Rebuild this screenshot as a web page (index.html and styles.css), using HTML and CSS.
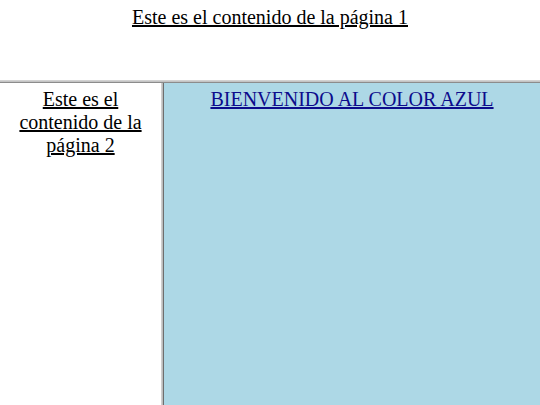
FILE: index.html
```html
<!DOCTYPE html>
<html lang="es">
<head>
<meta charset="utf-8">
<title>Frames</title>
<link rel="stylesheet" href="styles.css">
</head>
<body>
<div class="page">
  <div class="top-frame">
    <p class="frame-text top-text"><u>Este es el contenido de la página 1</u></p>
  </div>
  <div class="hborder"></div>
  <div class="bottom">
    <div class="left-frame">
      <p class="frame-text"><u>Este es el contenido de la página 2</u></p>
    </div>
    <div class="vborder"></div>
    <div class="right-frame">
      <p class="frame-text"><a class="blue-link" href="#">BIENVENIDO AL COLOR AZUL</a></p>
    </div>
  </div>
</div>
</body>
</html>
```

FILE: styles.css
```css
html, body {
  margin: 0;
  padding: 0;
  background: #ffffff;
}
.page {
  width: 540px;
  height: 405px;
  display: flex;
  flex-direction: column;
  overflow: hidden;
  font-family: "Times New Roman", "Liberation Serif", Tinos, "DejaVu Serif", serif;
  font-size: 20px;
  line-height: 23px;
  color: #000000;
}
.frame-text {
  margin: 0;
  padding: 5px 8px 0 8px;
  text-align: center;
}
.top-text {
  padding-top: 6px;
}
.top-frame {
  height: 80px;
  flex: none;
}
.hborder {
  height: 3px;
  flex: none;
  border-top: 1px solid #d2d2d2;
  border-bottom: 1px solid #8c8c8c;
  background: #c4c4c4;
  box-sizing: border-box;
}
.bottom {
  flex: 1;
  display: flex;
  min-height: 0;
}
.left-frame {
  width: 161px;
  flex: none;
  background: #ffffff;
}
.vborder {
  width: 3px;
  flex: none;
  box-sizing: border-box;
  border-left: 1px solid #cfcfcf;
  border-right: 1px solid #6e6e6e;
  background: #bdbdbd;
}
.right-frame {
  flex: 1;
  background: #add8e6;
}
.blue-link {
  color: #0c0c8c;
  text-decoration: underline;
}
```
